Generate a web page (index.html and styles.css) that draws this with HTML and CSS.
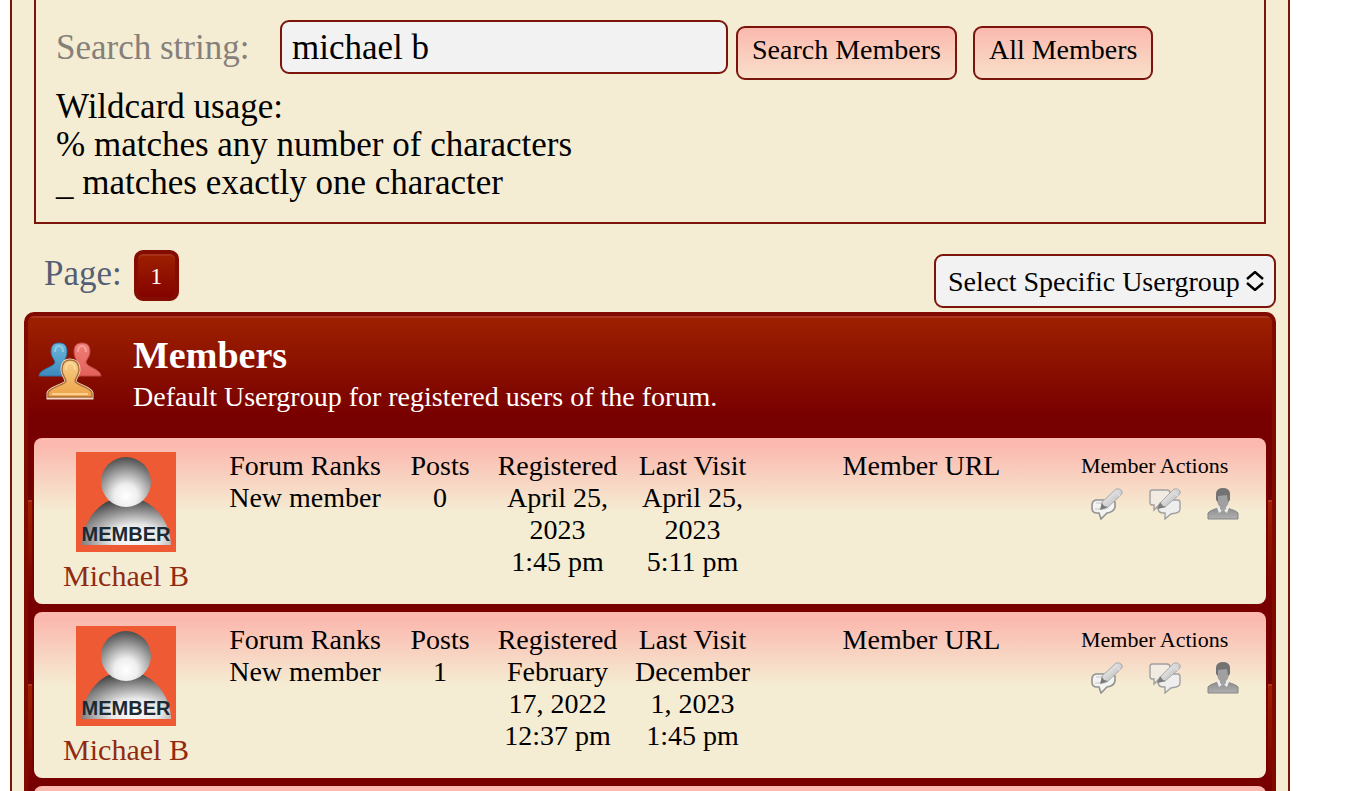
FILE: index.html
```html
<!DOCTYPE html>
<html lang="en">
<head>
    <meta charset="UTF-8">
    <meta name="viewport" content="width=device-width, initial-scale=1.0">
    <title>Members</title>
    <link rel="stylesheet" href="styles.css">
</head>
<body>
    <!-- shared icons -->
    <svg class="sprite" aria-hidden="true">
        <defs>
            <radialGradient id="head" cx="0.5" cy="0.78" r="0.78">
                <stop offset="0" stop-color="#ffffff"/>
                <stop offset="0.3" stop-color="#eeeeee"/>
                <stop offset="1" stop-color="#4c4c4c"/>
            </radialGradient>
            <radialGradient id="torso" cx="0.6" cy="0.85" r="0.8">
                <stop offset="0" stop-color="#ffffff"/>
                <stop offset="0.35" stop-color="#e8e8e8"/>
                <stop offset="1" stop-color="#454545"/>
            </radialGradient>
            <linearGradient id="pencil" x1="0" y1="0" x2="1" y2="1">
                <stop offset="0" stop-color="#f4f4f4"/>
                <stop offset="1" stop-color="#b4b4b4"/>
            </linearGradient>
            <linearGradient id="suit" x1="0" y1="0" x2="0" y2="1">
                <stop offset="0" stop-color="#8d8d8d"/>
                <stop offset="1" stop-color="#b0b0b0"/>
            </linearGradient>
            <linearGradient id="blue" x1="0" y1="0" x2="0" y2="1">
                <stop offset="0" stop-color="#6fb9dd"/>
                <stop offset="1" stop-color="#3d88bd"/>
            </linearGradient>
            <linearGradient id="red" x1="0" y1="0" x2="0" y2="1">
                <stop offset="0" stop-color="#ee8078"/>
                <stop offset="1" stop-color="#e4605a"/>
            </linearGradient>
            <linearGradient id="gold" x1="0" y1="0" x2="0" y2="1">
                <stop offset="0" stop-color="#f8cf8a"/>
                <stop offset="1" stop-color="#eda247"/>
            </linearGradient>
        </defs>
        <symbol id="icon-avatar" viewBox="0 0 100 100">
            <rect width="100" height="100" fill="#ee5a34"/>
            <path d="M6 93C7 66 26 45 50 45S94 66 95 93Z" fill="url(#torso)"/>
            <circle cx="50" cy="30" r="25" fill="url(#head)"/>
        </symbol>
        <symbol id="icon-pm" viewBox="0 0 32 32">
            <path d="M5 12Q1 13 1 17V20Q1 25 6 25H8L10 31L16 25Q23 24 24 19V14L20 12Z" fill="#f3f3f1" stroke="#929292" stroke-width="1.6"/>
            <path d="M5 15H12M4 21H14" fill="none" stroke="#dcdcdc" stroke-width="2"/>
            <path d="M10 21L11 14L25 1Q29 0 31 3Q32 5 30 7L16 20Z" fill="url(#pencil)" stroke="#aaaaaa"/>
            <path d="M9 22L11 15L13 18L17 19Z" fill="#777777"/>
            <path d="M24 3L29 8M14 14L25 4" stroke="#dcdcdc" stroke-width="2"/>
        </symbol>
        <symbol id="icon-reply" viewBox="0 0 32 32">
            <path d="M3 2H18Q21 2 21 5V14Q21 17 18 17H10L5 22V17H3Q1 17 1 14V5Q1 2 3 2Z" fill="#f1ebe2" stroke="#a0a0a0" stroke-width="1.4"/>
            <path d="M18 12H29Q31 12 31 15V21Q31 24 27 25L22 26L16 31V25H14Q10 25 9 21Z" fill="#eeeeee" stroke="#a0a0a0" stroke-width="1.4"/>
            <path d="M10 20L12 14L25 1Q29 0 31 3Q32 5 30 7L16 19Z" fill="url(#pencil)" stroke="#aaaaaa"/>
            <path d="M8 21L11 14L14 18L17 19Z" fill="#7d7d7d"/>
            <path d="M24 3L29 8M14 14L25 4" stroke="#dcdcdc" stroke-width="2"/>
        </symbol>
        <symbol id="icon-profile" viewBox="0 0 32 32">
            <path d="M1 31V25Q2 23 11 20H20Q30 23 31 25V31Z" fill="url(#suit)" stroke="#858585"/>
            <path d="M10 20L12 25L16 22L20 25L22 20L20 17H12Z" fill="#ececec"/>
            <path d="M13 17V21L16 24L19 21V17Z" fill="#a3a3a3"/>
            <path d="M10 8Q10 2 16 2T22 8V12Q21 20 16 20T10 12Z" fill="#a0a0a0"/>
            <path d="M9 12V5Q10 0 16 0Q22 0 23 5V12L21 14L20 7L11 8V14Z" fill="#737373"/>
        </symbol>
    </svg>

    <main class="forum">
        <form class="search-box" onsubmit="return false">
            <div class="search-row">
                <label for="search">Search string:</label>
                <input type="text" id="search" value="michael b">
                <div class="search-buttons">
                    <button type="submit">Search Members</button>
                    <button type="button">All Members</button>
                </div>
            </div>
            <p class="wildcards">Wildcard usage:<br>% matches any number of characters<br>_ matches exactly one character</p>
        </form>

        <div class="toolbar">
            <div class="pages">
                <span>Page:</span>
                <a class="page-number" href="#">1</a>
            </div>
            <div class="select-wrapper">
                <select aria-label="Usergroup">
                    <option>Select Specific Usergroup</option>
                </select>
                <svg class="select-arrows" viewBox="0 0 18 20" aria-hidden="true">
                    <path d="M1 8L9 1L17 8M1 12L9 19L17 12" fill="none" stroke="#000" stroke-width="2.4"/>
                </svg>
            </div>
        </div>

        <section class="panel">
            <header class="panel-header">
                <svg class="group-icon" viewBox="0 0 64 60" aria-hidden="true">
                    <path d="M13 11C13 4 16 2 21 2S29 4 29 11C29 15 27 18 26 21C26 25 41 27 42 35H1C1 28 17 26 17 21C16 18 13 15 13 11Z" fill="url(#blue)" stroke="#2f6f9f"/>
                    <path d="M17 11C17 7 18 5 21 5S25 7 25 11" fill="none" stroke="#8acbe6" stroke-width="2"/>
                    <path d="M36 11C36 4 39 2 44 2S52 4 52 11C52 15 49 18 48 21C48 26 63 28 63 35H23C25 28 39 26 39 21C38 18 36 15 36 11Z" fill="url(#red)" stroke="#c04842"/>
                    <path d="M40 11C40 7 41 5 44 5S48 7 48 11" fill="none" stroke="#f6a09a" stroke-width="2"/>
                    <path d="M24 29C24 22 27 19 32 19S41 22 41 29C41 33 38 36 37 40C37 44 53 46 54 52V57H10V52C11 46 28 44 28 40C27 36 24 33 24 29Z" fill="#f3d9c8" stroke="#f3d9c8" stroke-width="3"/>
                    <path d="M24 29C24 22 27 19 32 19S41 22 41 29C41 33 38 36 37 40C37 44 53 46 54 52V56H10V52C11 46 28 44 28 40C27 36 24 33 24 29Z" fill="url(#gold)" stroke="#a96f35" stroke-width="1.4"/>
                    <path d="M28 29C28 25 29 22 32 22S37 25 37 29M14 53H50" fill="none" stroke="#fbdda5" stroke-width="1.6"/>
                </svg>
                <div>
                    <h2>Members</h2>
                    <p>Default Usergroup for registered users of the forum.</p>
                </div>
            </header>

            <div class="member-list">
                <article class="member">
                    <div class="user">
                        <svg class="avatar" viewBox="0 0 100 100">
                            <use href="#icon-avatar"/>
                            <text x="50" y="89">MEMBER</text>
                        </svg>
                        <a href="#">Michael B</a>
                    </div>
                    <dl class="details">
                        <div class="ranks"><dt>Forum Ranks</dt><dd>New member</dd></div>
                        <div class="posts"><dt>Posts</dt><dd>0</dd></div>
                        <div class="registered"><dt>Registered</dt><dd>April 25, 2023<br>1:45 pm</dd></div>
                        <div class="visit"><dt>Last Visit</dt><dd>April 25, 2023<br>5:11 pm</dd></div>
                        <div class="url"><dt>Member URL</dt></div>
                    </dl>
                    <div class="actions">
                        <span>Member Actions</span>
                        <div class="action-icons">
                            <a href="#"><svg><use href="#icon-pm"/></svg></a>
                            <a href="#"><svg><use href="#icon-reply"/></svg></a>
                            <a href="#"><svg><use href="#icon-profile"/></svg></a>
                        </div>
                    </div>
                </article>

                <article class="member">
                    <div class="user">
                        <svg class="avatar" viewBox="0 0 100 100">
                            <use href="#icon-avatar"/>
                            <text x="50" y="89">MEMBER</text>
                        </svg>
                        <a href="#">Michael B</a>
                    </div>
                    <dl class="details">
                        <div class="ranks"><dt>Forum Ranks</dt><dd>New member</dd></div>
                        <div class="posts"><dt>Posts</dt><dd>1</dd></div>
                        <div class="registered"><dt>Registered</dt><dd>February 17, 2022<br>12:37 pm</dd></div>
                        <div class="visit"><dt>Last Visit</dt><dd>December 1, 2023<br>1:45 pm</dd></div>
                        <div class="url"><dt>Member URL</dt></div>
                    </dl>
                    <div class="actions">
                        <span>Member Actions</span>
                        <div class="action-icons">
                            <a href="#"><svg><use href="#icon-pm"/></svg></a>
                            <a href="#"><svg><use href="#icon-reply"/></svg></a>
                            <a href="#"><svg><use href="#icon-profile"/></svg></a>
                        </div>
                    </div>
                </article>

                <article class="member"></article>
            </div>
        </section>
    </main>
</body>
</html>
```

FILE: styles.css
```css
:root {
    --cream: #f5edd3;
    --line: #7b150c;
    --pink: #fbb9af;
    --field: #f2f2f2;
    --dark-red: #780000;
}

* {
    box-sizing: border-box;
}

body {
    margin: 0;
    height: 100vh;
    overflow-y: auto;
    scrollbar-width: none;
    background: #fff;
    color: #000;
    font-family: "Liberation Serif", "Times New Roman", serif;
    font-size: 28px;
    line-height: 32px;
}

p, h2, dl, dd {
    margin: 0;
}

a {
    text-decoration: none;
}

button, input, select {
    font-family: inherit;
    color: #000;
    height: 54px;
    border: 2px solid var(--line);
    border-radius: 9px;
}

.sprite {
    position: absolute;
    width: 0;
    height: 0;
}

.forum {
    margin: 0 57px 0 10px;
    padding: 0 12px;
    background: var(--cream);
    border: solid var(--line);
    border-width: 0 2px;
}

/* Search */
.search-box {
    margin: 0 10px;
    padding: 20px;
    border: 2px solid var(--line);
    border-top: none;
}

.search-row {
    display: flex;
    align-items: flex-start;
    gap: 8px;
}

.search-row label {
    width: 216px;
    color: #85807a;
    font-size: 35px;
    line-height: 56px;
}

.search-row input {
    width: 448px;
    padding: 2px 10px 0;
    background: var(--field);
    font-size: 35px;
}

.search-buttons {
    display: flex;
    gap: 16px;
    padding-top: 6px;
}

.search-buttons button {
    padding: 0 14px 6px;
    background: linear-gradient(var(--pink), #f8dfc9);
    font-size: 28px;
    cursor: pointer;
}

.wildcards {
    margin-top: 8px;
    font-size: 35px;
    line-height: 38px;
}

/* Page bar */
.toolbar {
    display: flex;
    justify-content: space-between;
    padding: 26px 0 4px;
}

.pages {
    display: flex;
    gap: 12px;
    padding-left: 20px;
    color: #535f75;
    font-size: 35px;
    line-height: 48px;
}

.page-number {
    width: 45px;
    height: 51px;
    border: 4px solid #830d02;
    border-radius: 9px;
    background: linear-gradient(#9d2000, #840300);
    box-shadow: inset 0 2px 0 #a83018;
    color: #fff;
    font-size: 24px;
    line-height: 44px;
    text-align: center;
}

.select-wrapper {
    position: relative;
    margin-top: 4px;
}

.select-wrapper select {
    width: 342px;
    padding: 0 34px 0 12px;
    appearance: none;
    background: var(--field);
    font-size: 28px;
}

.select-arrows {
    position: absolute;
    top: 17px;
    right: 12px;
    width: 18px;
    height: 20px;
    pointer-events: none;
}

/* Usergroup panel */
.panel {
    border: 4px solid #800a00;
    border-radius: 10px;
    background: linear-gradient(#aa3420 0 2px, #9d2000 2px, #780000 100px, #700000) 0 0 / 100% 184px;
    background-origin: padding-box;
}

.panel-header {
    display: flex;
    gap: 31px;
    padding: 17px 10px 21px;
    color: #fff;
}

.group-icon {
    width: 64px;
    height: 60px;
    margin-top: 8px;
}

.panel-header h2 {
    margin-bottom: 4px;
    font-size: 38px;
    line-height: 44px;
}

.member-list {
    display: flex;
    flex-direction: column;
    gap: 8px;
    margin: 0 4px;
    padding: 4px 2px;
    background: var(--dark-red);
}

.member {
    display: flex;
    min-height: 166px;
    padding: 12px 0 10px;
    border-radius: 8px;
    background: linear-gradient(var(--pink), var(--pink) 8px, var(--cream) 74px);
}

.user {
    display: flex;
    flex-direction: column;
    align-items: center;
    gap: 6px;
    width: 184px;
    padding-top: 2px;
}

.avatar {
    width: 100px;
    height: 100px;
}

.avatar text {
    font: bold 20px "Liberation Sans", Arial, sans-serif;
    fill: #1c2a33;
    text-anchor: middle;
}

.user a {
    color: #922a12;
    font-size: 30px;
    line-height: 36px;
}

.details {
    display: flex;
    flex: 1;
    text-align: center;
}

.ranks {
    width: 174px;
}

.posts {
    width: 96px;
}

.registered {
    width: 139px;
    padding: 0 8px;
}

.visit {
    width: 131px;
    padding: 0 6px;
}

.url {
    flex: 1;
    padding-left: 4px;
}

.actions {
    width: 185px;
    font-size: 22px;
}

.action-icons {
    display: flex;
    gap: 26px;
    padding: 6px 0 0 10px;
}

.action-icons svg {
    display: block;
    width: 32px;
    height: 32px;
}
```
